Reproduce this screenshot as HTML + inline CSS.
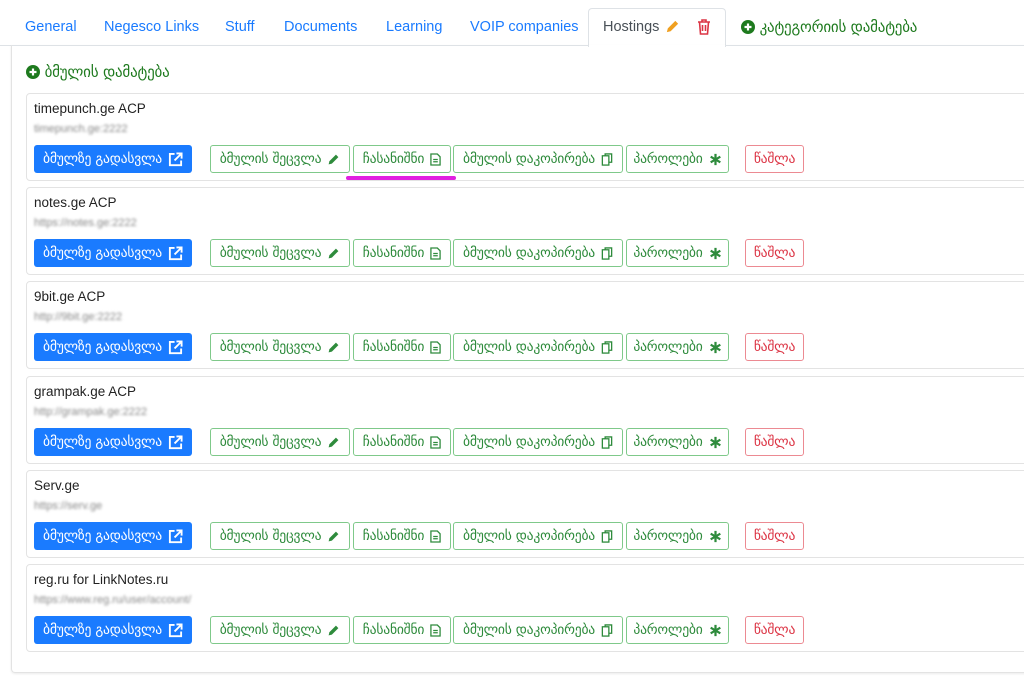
<!DOCTYPE html>
<html><head><meta charset="utf-8"><style>
*{box-sizing:border-box;margin:0;padding:0}
body{width:1024px;height:683px;overflow:hidden;background:#fff;font-family:"Liberation Sans","DejaVu Sans",sans-serif;position:relative}
.tab{position:absolute;top:19px;font-size:14.5px;color:#1a7bff}
.tabline{position:absolute;left:0;right:0;top:45px;border-top:1px solid #dee2e6}
.active{position:absolute;left:588px;top:8px;width:138px;height:39px;border:1px solid #dee2e6;border-bottom:none;background:#fff;border-radius:4px 4px 0 0}
.panel{position:absolute;left:11px;top:45px;width:1030px;height:628px;border:1px solid #e3e3e3;border-top:none;border-radius:0 0 4px 4px;box-shadow:0 1px 2px rgba(0,0,0,.08)}
.card{position:absolute;left:26px;width:1010px;height:88px;border:1px solid #e3e3e3;border-radius:4px}
.title{position:absolute;left:7px;top:7px;font-size:13.5px;color:#222}
.url{position:absolute;left:7px;top:29px;font-size:11px;color:#888;filter:blur(1.3px)}
.b{position:absolute;top:51px;height:28px;border-radius:3px;font-size:13.6px;font-family:"DejaVu Sans",sans-serif;display:flex;align-items:center;justify-content:center;gap:6px;white-space:nowrap;letter-spacing:-0.2px}
.blue{left:7px;width:158px;background:#1a7bff;color:#fff}
.g{border:1px solid #7fc98a;color:#2e8b3c}
.r{border:1px solid #ec8a92;color:#dc3545}
.ic{display:inline-block;flex:none}
</style></head><body>
<div class="tabline"></div>
<div class="active"></div>
<div class="tab" style="left:25px">General</div>
<div class="tab" style="left:104px">Negesco Links</div>
<div class="tab" style="left:225px">Stuff</div>
<div class="tab" style="left:284px">Documents</div>
<div class="tab" style="left:386px">Learning</div>
<div class="tab" style="left:470px">VOIP companies</div>
<div class="tab" style="left:603px;color:#495057">Hostings</div>
<svg style="position:absolute;left:665px;top:19px" width="15" height="15" viewBox="0 0 16 16"><path d="M2 14l1-4 8-8 3 3-8 8z" fill="#f0a020"/></svg>
<svg style="position:absolute;left:697px;top:19px" width="14" height="16" viewBox="0 0 14 16"><path d="M1 3h12M5 3V1h4v2M2.5 3l1 12h7l1-12M5.5 6v6M8.5 6v6" stroke="#dc3545" stroke-width="1.6" fill="none"/></svg>
<div class="tab" style="left:741px;top:18px;color:#1e7a1e;font-family:'DejaVu Sans',sans-serif;font-size:15px;letter-spacing:-0.2px">
<svg width="14" height="14" viewBox="0 0 14 14" style="vertical-align:-2px"><circle cx="7" cy="7" r="7" fill="#1e7a1e"/><path d="M7 3.5v7M3.5 7h7" stroke="#fff" stroke-width="2.2"/></svg> კატეგორიის დამატება</div>
<div class="panel"></div>
<div style="position:absolute;left:26px;top:63px;color:#1e7a1e;font-family:'DejaVu Sans',sans-serif;font-size:15px;letter-spacing:-0.2px">
<svg width="14" height="14" viewBox="0 0 14 14" style="vertical-align:-2px"><circle cx="7" cy="7" r="7" fill="#1e7a1e"/><path d="M7 3.5v7M3.5 7h7" stroke="#fff" stroke-width="2.2"/></svg> ბმულის დამატება</div>
<div style="position:absolute;left:346px;top:176px;width:110px;height:4px;border-radius:2px;background:#e020e0;z-index:2"></div>
<div id="cards"></div>
<script>
var d=[["timepunch.ge ACP","timepunch.ge:2222",93],["notes.ge ACP","https://notes.ge:2222",187],["9bit.ge ACP","http://9bit.ge:2222",281],["grampak.ge ACP","http://grampak.ge:2222",376],["Serv.ge","https://serv.ge",470],["reg.ru for LinkNotes.ru","https://www.reg.ru/user/account/",564]];
var pen='<svg class="ic" width="13" height="13" viewBox="0 0 16 16"><path d="M2 14l1-4 8-8 3 3-8 8z" fill="#2e8b3c"/></svg>';
var doc='<svg class="ic" width="11" height="13" viewBox="0 0 12 14"><path d="M1 1h7l3 3v9H1z M3.5 7h5M3.5 9.5h5" stroke="#2e8b3c" stroke-width="1.4" fill="none"/></svg>';
var cp='<svg class="ic" width="12" height="13" viewBox="0 0 12 14"><rect x="1" y="3" width="7" height="10" stroke="#2e8b3c" stroke-width="1.4" fill="none"/><path d="M4 3V1h7v9H8" stroke="#2e8b3c" stroke-width="1.4" fill="none"/></svg>';
var ast='<svg class="ic" width="13" height="13" viewBox="0 0 14 14"><path d="M7 1v12M1.8 4l10.4 6M1.8 10l10.4-6" stroke="#2e8b3c" stroke-width="2.4"/></svg>';
var ext='<svg class="ic" width="15" height="15" viewBox="0 0 16 16"><path d="M7 2H2v12h12V9" stroke="#fff" stroke-width="2" fill="none"/><path d="M9 1.5h5.5V7M14 2L7 9" stroke="#fff" stroke-width="2" fill="none"/></svg>';
var h='';
d.forEach(function(c){h+='<div class="card" style="top:'+c[2]+'px"><div class="title">'+c[0]+'</div><div class="url">'+c[1]+'</div>'+
'<div class="b blue">ბმულზე გადასვლა '+ext+'</div>'+
'<div class="b g" style="left:183px;width:140px">ბმულის შეცვლა '+pen+'</div>'+
'<div class="b g" style="left:326px;width:98px">ჩასანიშნი '+doc+'</div>'+
'<div class="b g" style="left:426px;width:170px">ბმულის დაკოპირება '+cp+'</div>'+
'<div class="b g" style="left:599px;width:103px">პაროლები '+ast+'</div>'+
'<div class="b r" style="left:718px;width:59px">წაშლა</div></div>';});
document.getElementById('cards').innerHTML=h;
</script>
</body></html>
